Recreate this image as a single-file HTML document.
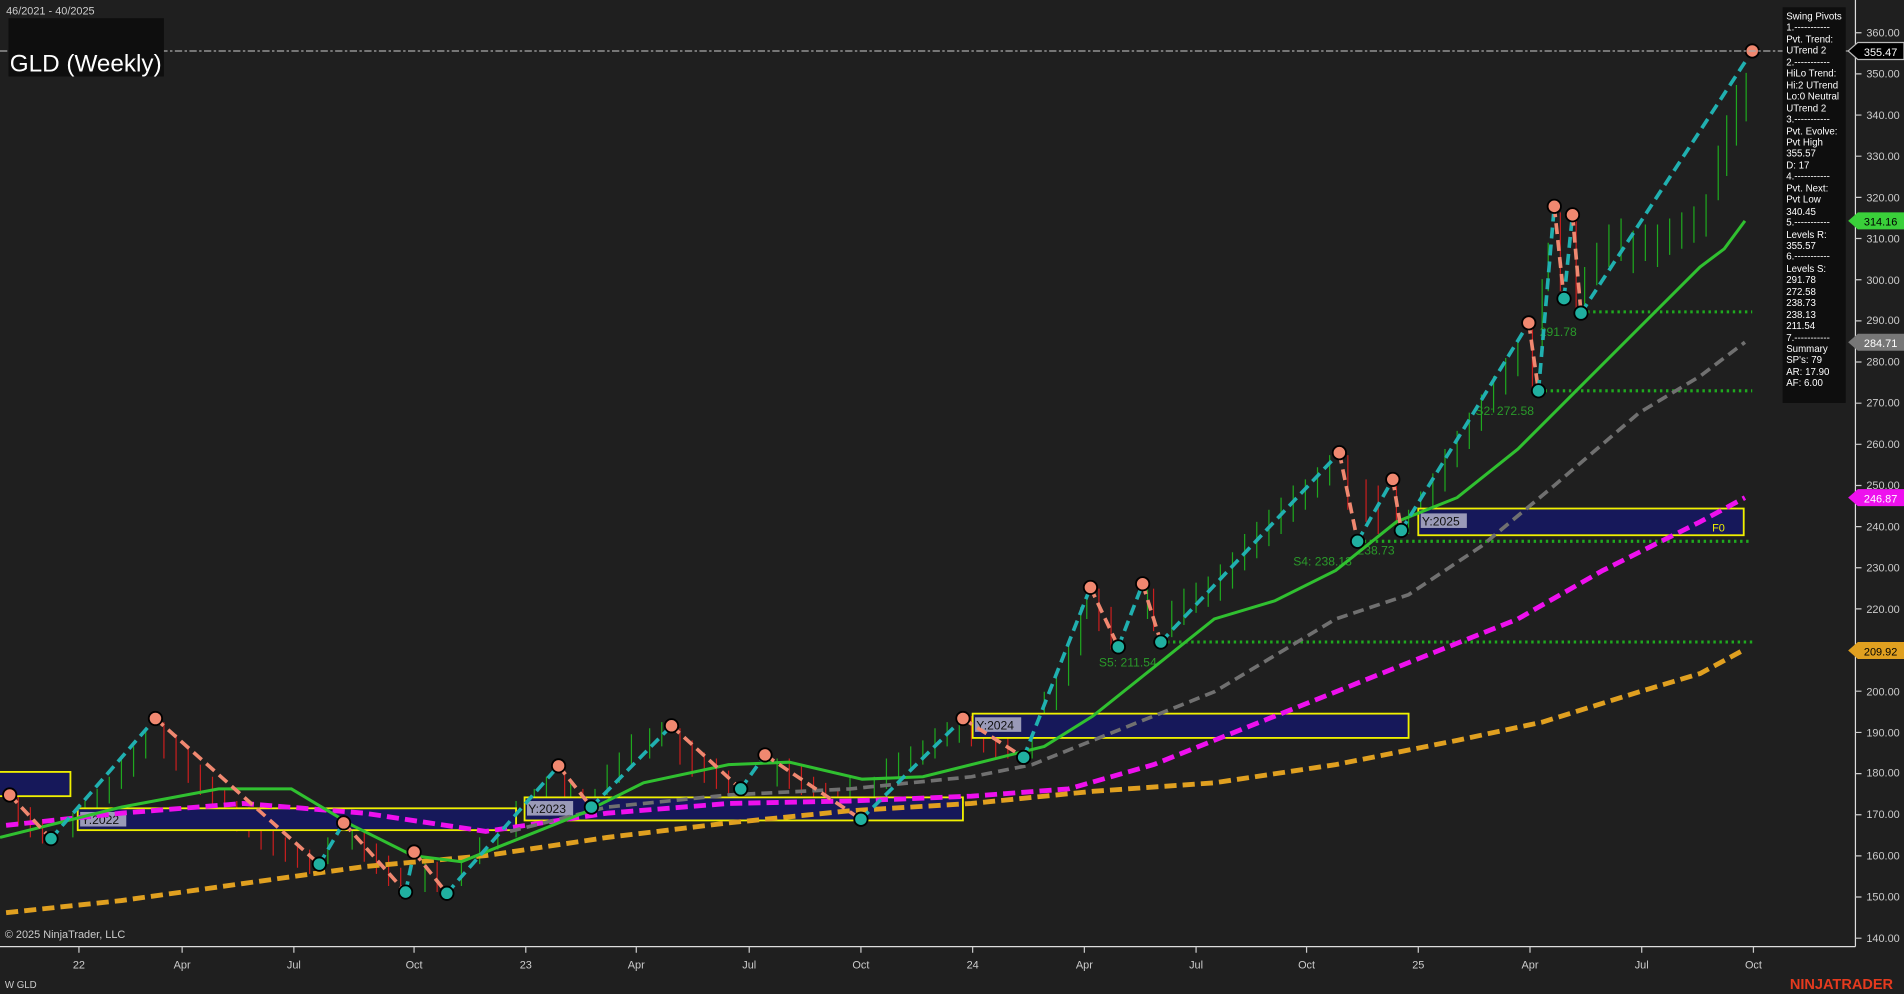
<!DOCTYPE html>
<html><head><meta charset="utf-8"><style>
html,body{margin:0;padding:0;background:#1f1f1f;}
svg{display:block;font-family:"Liberation Sans",Arial,sans-serif;}
</style></head><body>
<svg width="1904" height="994" viewBox="0 0 1568 819" preserveAspectRatio="none" xmlns="http://www.w3.org/2000/svg">
<rect width="1568" height="819" fill="#1f1f1f"/>
<!-- approximate bars -->
<path fill="none" stroke="#1fa81f" stroke-width="1" d="M60,670V690M70,660V680M80,650V675M90,640V662M100,625V650M110,615V640M120,600V625M270,690V712M290,680V700M350,710V735M380,705V730M395,690V712M410,675V700M425,660V690M440,650V675M450,640V665M470,645V670M490,650V668M500,630V655M510,620V645M520,605V630M535,600V625M545,595V615M640,625V648M700,640V665M720,640V660M730,625V650M740,620V640M750,615V635M760,610V630M770,600V625M780,595V615M790,590V612M850,600V625M860,570V600M870,555V585M880,530V565M890,500V540M895,485V510M945,485V510M965,495V525M975,485V515M985,480V505M995,475V500M1005,465V495M1015,455V485M1025,440V470M1035,430V460M1045,420V450M1055,410V440M1065,400V430M1075,395V420M1085,385V410M1095,375V400M1160,420V440M1170,405V430M1180,390V420M1190,370V405M1200,355V385M1210,340V370M1220,325V355M1230,310V340M1240,295V325M1250,280V310M1270,230V290M1275,200V240M1305,220V260M1315,200V235M1325,185V220M1335,180V215M1345,190V225M1355,185V215M1365,185V220M1375,180V210M1385,175V205M1395,170V200M1405,160V195M1415,120V165M1422,95V145M1430,70V120M1438,60V100"/>
<path fill="none" stroke="#c81e1e" stroke-width="1" d="M15,655V680M25,665V690M35,675V695M135,595V625M145,605V635M155,615V645M165,630V655M175,640V665M185,650V675M195,660V685M205,665V690M215,670V700M225,680V705M235,690V710M245,695V715M255,700V720M300,685V710M310,695V720M320,705V730M330,715V740M360,710V735M465,635V660M480,650V675M560,600V630M570,610V640M580,620V645M590,625V650M600,635V660M650,625V650M660,630V655M670,640V665M680,645V670M690,650V672M800,590V615M810,595V620M820,600V625M830,605V625M905,485V520M915,500V535M950,485V520M1110,375V420M1125,395V430M1135,400V440M1150,400V435M1262,266V320M1285,175V240M1298,180V255"/>
<!-- boxes -->
<g stroke="#f0f000" stroke-width="1.5" fill="#16185a">
<rect x="-2" y="636" width="60" height="20"/>
<rect x="64" y="666" width="361" height="18"/>
<rect x="432" y="657" width="361" height="19"/>
<rect x="801" y="588" width="359" height="20"/>
<rect x="1168" y="419" width="268" height="22"/>
</g>
<g font-size="10" fill="#111">
<rect x="66" y="669" width="38" height="12" fill="#9a9ab8"/><text x="67" y="679">Y:2022</text>
<rect x="434" y="660" width="38" height="12" fill="#9a9ab8"/><text x="435" y="670">Y:2023</text>
<rect x="803" y="591" width="38" height="12" fill="#9a9ab8"/><text x="804" y="601">Y:2024</text>
<rect x="1170" y="423" width="38" height="12" fill="#9a9ab8"/><text x="1171" y="433">Y:2025</text>
</g>
<text x="1410" y="438" font-size="9" fill="#f0f000">F0</text>
<g stroke="#1faa1f" stroke-width="2.5" stroke-dasharray="2,3">
<line x1="1302" y1="257" x2="1443" y2="257"/>
<line x1="1267" y1="322" x2="1443" y2="322"/>
<line x1="1118" y1="446" x2="1443" y2="446"/>
<line x1="956" y1="529" x2="1443" y2="529"/>
</g>
<g font-size="10" fill="#2a9a2a">
<text x="1268" y="277">291.78</text><text x="1215" y="342">S2: 272.58</text>
<text x="1065" y="466">S4: 238.13</text><text x="1118" y="457">238.73</text>
<text x="905" y="549">S5: 211.54</text>
</g>
<polyline fill="none" stroke="#e0a020" stroke-width="4" stroke-dasharray="10,5" points="5,752 100,742 200,728 300,714 400,705 500,690 600,678 700,668 800,662 900,652 1000,645 1100,630 1200,610 1270,595 1350,570 1400,555 1437,535"/>
<polyline fill="none" stroke="#ee10ee" stroke-width="4" stroke-dasharray="10,5" points="5,680 100,670 200,662 300,670 400,685 500,670 600,662 700,660 800,656 880,650 950,630 1050,590 1150,550 1250,510 1320,470 1400,430 1437,410"/>
<polyline fill="none" stroke="#707070" stroke-width="3" stroke-dasharray="9,5" points="420,685 500,665 600,655 700,650 800,640 850,630 900,610 1000,570 1100,510 1160,490 1220,450 1280,400 1350,340 1400,310 1437,282"/>
<polyline fill="none" stroke="#30c030" stroke-width="2.5" points="0,690 100,665 180,650 240,650 290,680 340,705 380,710 430,690 480,670 530,645 600,630 650,628 710,642 760,640 820,625 860,615 900,590 950,550 1000,510 1050,495 1100,470 1150,430 1200,410 1250,370 1280,340 1300,320 1350,270 1400,220 1420,205 1437,182"/>
<!-- zigzag -->
<g stroke-width="3" stroke-dasharray="9,5" fill="none">
<polyline stroke="#f08870" points="8,655 42,691"/>
<polyline stroke="#20b0b0" points="42,691 128,592"/>
<polyline stroke="#f08870" points="128,592 263,712"/>
<polyline stroke="#20b0b0" points="263,712 283,678"/>
<polyline stroke="#f08870" points="283,678 334,735"/>
<polyline stroke="#20b0b0" points="334,735 341,702"/>
<polyline stroke="#f08870" points="341,702 368,736"/>
<polyline stroke="#20b0b0" points="368,736 460,631"/>
<polyline stroke="#f08870" points="460,631 487,665"/>
<polyline stroke="#20b0b0" points="487,665 553,598"/>
<polyline stroke="#f08870" points="553,598 610,650"/>
<polyline stroke="#20b0b0" points="610,650 630,622"/>
<polyline stroke="#f08870" points="630,622 709,675"/>
<polyline stroke="#20b0b0" points="709,675 793,592"/>
<polyline stroke="#f08870" points="793,592 843,624"/>
<polyline stroke="#20b0b0" points="843,624 898,484"/>
<polyline stroke="#f08870" points="898,484 921,533"/>
<polyline stroke="#20b0b0" points="921,533 941,481"/>
<polyline stroke="#f08870" points="941,481 956,529"/>
<polyline stroke="#20b0b0" points="956,529 1103,373"/>
<polyline stroke="#f08870" points="1103,373 1118,446"/>
<polyline stroke="#20b0b0" points="1118,446 1147,395"/>
<polyline stroke="#f08870" points="1147,395 1154,437"/>
<polyline stroke="#20b0b0" points="1154,437 1259,266"/>
<polyline stroke="#f08870" points="1259,266 1267,322"/>
<polyline stroke="#20b0b0" points="1267,322 1280,170"/>
<polyline stroke="#f08870" points="1280,170 1288,246"/>
<polyline stroke="#20b0b0" points="1288,246 1295,177"/>
<polyline stroke="#f08870" points="1295,177 1302,258"/>
<polyline stroke="#20b0b0" points="1302,258 1443,42"/>
</g>
<g stroke="#000" stroke-width="1.5" fill="#f08870">
<circle cx="8" cy="655" r="5.5"/><circle cx="128" cy="592" r="5.5"/><circle cx="283" cy="678" r="5.5"/><circle cx="341" cy="702" r="5.5"/><circle cx="460" cy="631" r="5.5"/><circle cx="553" cy="598" r="5.5"/><circle cx="630" cy="622" r="5.5"/><circle cx="793" cy="592" r="5.5"/><circle cx="898" cy="484" r="5.5"/><circle cx="941" cy="481" r="5.5"/><circle cx="1103" cy="373" r="5.5"/><circle cx="1147" cy="395" r="5.5"/><circle cx="1259" cy="266" r="5.5"/><circle cx="1280" cy="170" r="5.5"/><circle cx="1295" cy="177" r="5.5"/><circle cx="1443" cy="42" r="5.5"/>
</g>
<g stroke="#000" stroke-width="1.5" fill="#20b0a0">
<circle cx="42" cy="691" r="5.5"/><circle cx="263" cy="712" r="5.5"/><circle cx="334" cy="735" r="5.5"/><circle cx="368" cy="736" r="5.5"/><circle cx="487" cy="665" r="5.5"/><circle cx="610" cy="650" r="5.5"/><circle cx="709" cy="675" r="5.5"/><circle cx="843" cy="624" r="5.5"/><circle cx="921" cy="533" r="5.5"/><circle cx="956" cy="529" r="5.5"/><circle cx="1118" cy="446" r="5.5"/><circle cx="1154" cy="437" r="5.5"/><circle cx="1267" cy="322" r="5.5"/><circle cx="1288" cy="246" r="5.5"/><circle cx="1302" cy="258" r="5.5"/>
</g>
<line x1="0" y1="42" x2="1528" y2="42" stroke="#aaa" stroke-width="1" stroke-dasharray="6,2,2,2"/>
<rect x="7" y="15" width="128" height="48" fill="#0e0e0e"/>
<text x="8" y="59" font-size="20" fill="#fff">GLD (Weekly)</text>
<text x="5" y="12" font-size="9" fill="#ccc">46/2021 - 40/2025</text>
<text x="4" y="773" font-size="9" fill="#ccc">© 2025 NinjaTrader, LLC</text>
<text x="4" y="814" font-size="8" fill="#ccc">W GLD</text>
<text x="1474" y="815" font-size="12" font-weight="bold" fill="#e53a1e">NINJATRADER</text>
<line x1="1528" y1="0" x2="1528" y2="780" stroke="#ddd" stroke-width="1"/>
<line x1="0" y1="780" x2="1528" y2="780" stroke="#ddd" stroke-width="1"/>
<path stroke="#ccc" d="M1528,27h5M1528,60.9h5M1528,94.8h5M1528,128.7h5M1528,162.6h5M1528,196.5h5M1528,230.5h5M1528,264.4h5M1528,298.3h5M1528,332.2h5M1528,366.1h5M1528,400h5M1528,433.9h5M1528,467.8h5M1528,501.7h5M1528,535.6h5M1528,569.5h5M1528,603.5h5M1528,637.4h5M1528,671.3h5M1528,705.2h5M1528,739.1h5M1528,773h5M65,780v5M150,780v5M242,780v5M341,780v5M433,780v5M524,780v5M617,780v5M709,780v5M801,780v5M893,780v5M985,780v5M1076,780v5M1168,780v5M1260,780v5M1352,780v5M1444,780v5"/>
<g font-size="9" fill="#ccc">
<text x="1537" y="30">360.00</text><text x="1537" y="64">350.00</text><text x="1537" y="98">340.00</text><text x="1537" y="132">330.00</text><text x="1537" y="166">320.00</text><text x="1537" y="200">310.00</text><text x="1537" y="234">300.00</text><text x="1537" y="267">290.00</text><text x="1537" y="301">280.00</text><text x="1537" y="335">270.00</text><text x="1537" y="369">260.00</text><text x="1537" y="403">250.00</text><text x="1537" y="437">240.00</text><text x="1537" y="471">230.00</text><text x="1537" y="505">220.00</text><text x="1537" y="539">210.00</text><text x="1537" y="573">200.00</text><text x="1537" y="607">190.00</text><text x="1537" y="640">180.00</text><text x="1537" y="674">170.00</text><text x="1537" y="708">160.00</text><text x="1537" y="742">150.00</text><text x="1537" y="776">140.00</text>
</g>
<g font-size="9" fill="#ccc" text-anchor="middle">
<text x="65" y="798">22</text><text x="150" y="798">Apr</text><text x="242" y="798">Jul</text><text x="341" y="798">Oct</text><text x="433" y="798">23</text><text x="524" y="798">Apr</text><text x="617" y="798">Jul</text><text x="709" y="798">Oct</text><text x="801" y="798">24</text><text x="893" y="798">Apr</text><text x="985" y="798">Jul</text><text x="1076" y="798">Oct</text><text x="1168" y="798">25</text><text x="1260" y="798">Apr</text><text x="1352" y="798">Jul</text><text x="1444" y="798">Oct</text>
</g>
<rect x="1468" y="6" width="52" height="326" fill="#0e0e0e"/>
<g font-size="8" fill="#fff">
<text x="1471" y="16">Swing Pivots</text><text x="1471" y="25">1.-----------</text><text x="1471" y="35">Pvt. Trend:</text><text x="1471" y="44">UTrend 2</text><text x="1471" y="54">2.-----------</text><text x="1471" y="63">HiLo Trend:</text><text x="1471" y="73">Hi:2 UTrend</text><text x="1471" y="82">Lo:0 Neutral</text><text x="1471" y="92">UTrend 2</text><text x="1471" y="101">3.-----------</text><text x="1471" y="111">Pvt. Evolve:</text><text x="1471" y="120">Pvt High</text><text x="1471" y="129">355.57</text><text x="1471" y="139">D: 17</text><text x="1471" y="148">4.-----------</text><text x="1471" y="158">Pvt. Next:</text><text x="1471" y="167">Pvt Low</text><text x="1471" y="177">340.45</text><text x="1471" y="186">5.-----------</text><text x="1471" y="196">Levels R:</text><text x="1471" y="205">355.57</text><text x="1471" y="214">6.-----------</text><text x="1471" y="224">Levels S:</text><text x="1471" y="233">291.78</text><text x="1471" y="243">272.58</text><text x="1471" y="252">238.73</text><text x="1471" y="262">238.13</text><text x="1471" y="271">211.54</text><text x="1471" y="281">7.-----------</text><text x="1471" y="290">Summary</text><text x="1471" y="299">SP's: 79</text><text x="1471" y="309">AR: 17.90</text><text x="1471" y="318">AF: 6.00</text>
</g>
<g font-size="9">
<path d="M1522,42 L1530,35 L1568,35 L1568,49 L1530,49Z" fill="#000" stroke="#bbb"/><text x="1535" y="46" fill="#fff">355.47</text>
<path d="M1522,182 L1530,175 L1568,175 L1568,189 L1530,189Z" fill="#3ad03a"/><text x="1535" y="186" fill="#000">314.16</text>
<path d="M1522,282 L1530,275 L1568,275 L1568,289 L1530,289Z" fill="#777"/><text x="1535" y="286" fill="#fff">284.71</text>
<path d="M1522,410 L1530,403 L1568,403 L1568,417 L1530,417Z" fill="#ee10ee"/><text x="1535" y="414" fill="#fff">246.87</text>
<path d="M1522,536 L1530,529 L1568,529 L1568,543 L1530,543Z" fill="#e0a020"/><text x="1535" y="540" fill="#000">209.92</text>
</g>
</svg>
</body></html>
